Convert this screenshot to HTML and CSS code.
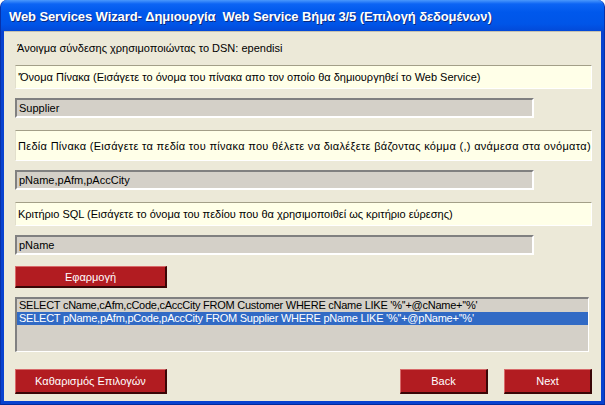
FILE: index.html
```html
<!DOCTYPE html>
<html lang="el">
<head>
  <meta charset="UTF-8" />
  <title>Web Services Wizard</title>
  <link rel="stylesheet" href="styles.css">
</head>
<body>
  <div class="window">
    <div class="title-bar">Web Services Wizard- Δημιουργία&nbsp; Web Service Βήμα 3/5 (Επιλογή δεδομένων)</div>

    <div class="client">
      <div class="dsn">Άνοιγμα σύνδεσης χρησιμοποιώντας το DSN: ependisi</div>

      <div class="hint">'Όνομα Πίνακα (Εισάγετε το όνομα του πίνακα απο τον οποίο θα δημιουργηθεί το Web Service)</div>
      <div class="field">Supplier</div>

      <div class="hint tall">Πεδία Πίνακα (Εισάγετε τα πεδία του πίνακα που θέλετε να διαλέξετε βάζοντας κόμμα (,) ανάμεσα στα ονόματα)</div>
      <div class="field">pName,pAfm,pAccCity</div>

      <div class="hint">Κριτήριο SQL (Εισάγετε το όνομα του πεδίου που θα χρησιμοποιθεί ως κριτήριο εύρεσης)</div>
      <div class="field">pName</div>

      <button class="btn apply">Εφαρμογή</button>

      <div class="listbox">
        <div class="list-row">SELECT cName,cAfm,cCode,cAccCity FROM Customer WHERE cName LIKE '%''+@cName+''%'</div>
        <div class="list-row selected">SELECT pName,pAfm,pCode,pAccCity FROM Supplier WHERE pName LIKE '%''+@pName+''%'</div>
      </div>

      <div class="footer">
        <button class="btn clear">Καθαρισμός Επιλογών</button>
        <div class="nav">
          <button class="btn">Back</button>
          <button class="btn">Next</button>
        </div>
      </div>
    </div>
  </div>
</body>
</html>
```

FILE: styles.css
```css
* {
  margin: 0;
  padding: 0;
  box-sizing: border-box;
}

body {
  font-family: "Liberation Sans", Arial, sans-serif;
  font-size: 11px;
  background: #ffffff;
}

.window {
  width: 605px;
  height: 405px;
  background: #0842d0;
  display: flex;
  flex-direction: column;
  border-radius: 7px 7px 0 0;
  overflow: hidden;
  border-left: 1px solid #0831a8;
  border-right: 1px solid #0831a8;
  border-bottom: 1px solid #002a9c;
}

.title-bar {
  height: 31px;
  flex-shrink: 0;
  padding: 9px 0 0 8px;
  color: #ffffff;
  font-weight: bold;
  font-size: 13px;
  letter-spacing: -0.1px;
  text-shadow: 1px 1px 0 #0a2a80;
  background: linear-gradient(#4a98fc 0px, #0c64f4 4px, #0058ec 12px, #0055e8 24px, #0349d8 31px);
}

.client {
  flex: 1;
  margin: 0 3px 3px 3px;
  background: #ece9d8;
  padding: 10px 9px 0 11px;
  display: flex;
  flex-direction: column;
  border-top: 1px solid #c6c2b0;
}

.dsn {
  line-height: 13px;
  height: 13px;
  padding-left: 2px;
}

.hint {
  margin-top: 10px;
  height: 24px;
  display: flex;
  align-items: center;
  padding-left: 2px;
  background: #ffffe8;
  border-top: 1px solid #a39f88;
  border-left: 1px solid #e2dfcc;
  border-right: 1px solid #ffffff;
  border-bottom: 1px solid #ffffff;
  white-space: nowrap;
}

.hint.tall {
  margin-top: 12px;
  height: 31px;
  letter-spacing: 0.3px;
}

.field {
  margin-top: 9px;
  width: 519px;
  height: 20px;
  line-height: 16px;
  padding-left: 2px;
  background: #d4d0c8;
  border-top: 2px solid #808080;
  border-left: 2px solid #808080;
  border-right: 2px solid #ffffff;
  border-bottom: 2px solid #ffffff;
}

.field + .hint {
  margin-top: 12px;
}

.btn {
  font-family: "Liberation Sans", Arial, sans-serif;
  font-size: 11px;
  color: #ffffff;
  background: #b21c21;
  border-top: 1px solid #d86a6a;
  border-left: 1px solid #d86a6a;
  border-right: 2px solid #3a0606;
  border-bottom: 2px solid #3a0606;
  height: 25px;
}

.apply {
  margin-top: 11px;
  width: 152px;
  height: 22px;
}

.listbox {
  margin-top: 9px;
  height: 55px;
  margin-right: 3px;
  background: #d4d0c8;
  border-top: 2px solid #808080;
  border-left: 2px solid #808080;
  border-right: 1px solid #ffffff;
  border-bottom: 1px solid #ffffff;
  white-space: nowrap;
  letter-spacing: -0.25px;
}

.list-row {
  height: 13px;
  line-height: 13px;
  padding-left: 2px;
}

.list-row.selected {
  background: #316ac5;
  color: #ffffff;
}

.footer {
  margin-top: 17px;
  display: flex;
  justify-content: space-between;
}

.clear {
  width: 152px;
}

.nav {
  display: flex;
  gap: 16px;
}

.nav .btn {
  width: 88px;
}
```
